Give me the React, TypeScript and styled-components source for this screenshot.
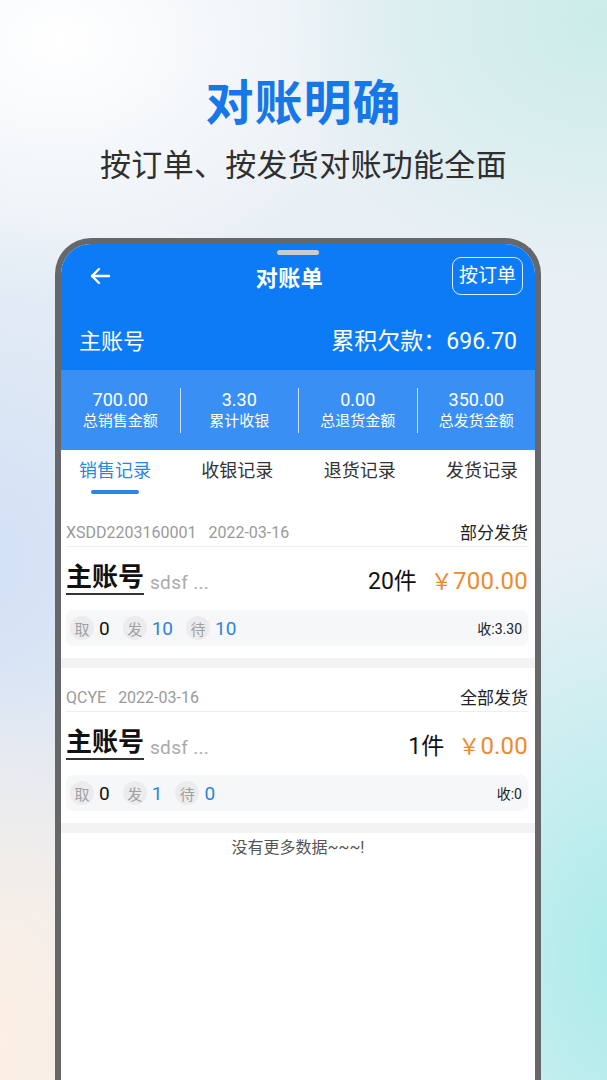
import React from 'react';
import styled, { createGlobalStyle } from 'styled-components';

const GlobalStyle = createGlobalStyle`
  html, body {
    margin: 0;
    padding: 0;
  }
  body {
    font-family: Roboto, "Noto Sans CJK SC", sans-serif;
  }
`;

const Page = styled.div`
  width: 607px;
  height: 1080px;
  overflow: hidden;
  display: flex;
  flex-direction: column;
  align-items: center;
  background:
    radial-gradient(ellipse 320px 260px at 600px 20px, rgba(200, 236, 232, 0.9), transparent),
    radial-gradient(ellipse 260px 420px at 620px 960px, rgba(170, 236, 234, 1), transparent),
    radial-gradient(ellipse 300px 380px at -20px 1040px, rgba(253, 238, 226, 1), transparent),
    radial-gradient(ellipse 320px 360px at -20px 560px, rgba(210, 224, 245, 1), transparent),
    radial-gradient(ellipse 340px 260px at 60px 40px, rgba(255, 255, 255, 1), transparent),
    #e8eff5;
`;

const Headline = styled.h1`
  margin: 74px 0 0;
  font-size: 48px;
  line-height: 60px;
  font-weight: 700;
  color: #1577ea;
  letter-spacing: 1px;
`;

const Subline = styled.p`
  margin: 12px 0 0;
  font-size: 31px;
  line-height: 40px;
  color: #2f2f2f;
  letter-spacing: 0.3px;
`;

const Phone = styled.div`
  margin: 52px 0 0 55px;
  align-self: flex-start;
  width: 474px;
  flex: 1;
  border: 6px solid #666768;
  border-bottom: none;
  border-radius: 36px 36px 0 0;
  background: #fff;
  overflow: hidden;
  position: relative;
  display: flex;
  flex-direction: column;
`;

const Notch = styled.div`
  position: absolute;
  top: 6px;
  left: 50%;
  margin-left: -21px;
  width: 42px;
  height: 5px;
  border-radius: 3px;
  background: #c9ccd1;
`;

const Header = styled.div`
  background: #0e7bf6;
  color: #fff;
`;

const NavBar = styled.div`
  height: 64px;
  display: flex;
  align-items: center;
  justify-content: space-between;
  padding: 0 12px 0 28px;
`;

const BackButton = styled.div`
  display: flex;
  align-items: center;
`;

const NavTitle = styled.div`
  margin-left: 16px;
  font-size: 22px;
  font-weight: 700;
  letter-spacing: 0.5px;
`;

const OutlineButton = styled.div`
  border: 1px solid rgba(255, 255, 255, 0.85);
  border-radius: 9px;
  padding: 0 6px;
  height: 36px;
  line-height: 35px;
  font-size: 19px;
`;

const AccountRow = styled.div`
  height: 62px;
  display: flex;
  align-items: center;
  justify-content: space-between;
  padding: 0 18px;
`;

const AccountName = styled.div`
  font-size: 22px;
`;

const Debt = styled.div`
  font-size: 23px;
`;

const Stats = styled.div`
  height: 80px;
  background: #3a8ff5;
  display: grid;
  grid-template-columns: repeat(4, 1fr);
  align-items: center;
`;

const Stat = styled.div<{ $divider?: boolean }>`
  height: 45px;
  display: flex;
  flex-direction: column;
  align-items: center;
  justify-content: center;
  color: #fff;
  border-left: ${(p) => (p.$divider ? '1px solid rgba(255,255,255,0.75)' : 'none')};
`;

const StatValue = styled.div`
  font-size: 18px;
  line-height: 22px;
`;

const StatLabel = styled.div`
  font-size: 15px;
  line-height: 21px;
`;

const Tabs = styled.div`
  height: 53px;
  display: flex;
  justify-content: space-between;
  padding: 0 17px 0 18px;
`;

const Tab = styled.div<{ $active?: boolean }>`
  position: relative;
  font-size: 18px;
  line-height: 22px;
  padding-top: 10px;
  color: ${(p) => (p.$active ? '#2a86e6' : '#333')};
  &::after {
    content: '';
    display: ${(p) => (p.$active ? 'block' : 'none')};
    position: absolute;
    left: 50%;
    margin-left: -24px;
    top: 40px;
    width: 48px;
    height: 4px;
    border-radius: 2px;
    background: #2a86e6;
  }
`;

const Card = styled.div`
  padding: 0 7px 12px 5px;
`;

const CardHead = styled.div`
  height: 44px;
  box-sizing: border-box;
  display: flex;
  align-items: flex-end;
  justify-content: space-between;
  padding-bottom: 2px;
  border-bottom: 1px solid #eeeeee;
  line-height: 22px;
`;

const OrderMeta = styled.div`
  font-size: 16px;
  color: #9a9a9a;
  display: flex;
  gap: 12px;
`;

const Status = styled.div`
  font-size: 17px;
  color: #222;
`;

const NameRow = styled.div`
  height: 63px;
  display: flex;
  align-items: center;
  justify-content: space-between;
`;

const NameGroup = styled.div`
  display: flex;
  align-items: flex-end;
  gap: 6px;
`;

const Name = styled.div`
  font-size: 26px;
  font-weight: 700;
  line-height: 31px;
  color: #111;
  border-bottom: 2px solid #333;
`;

const Remark = styled.div`
  font-size: 19px;
  color: #aaa;
  line-height: 24px;
  letter-spacing: 0.3px;
`;

const AmountGroup = styled.div`
  display: flex;
  align-items: center;
  gap: 14px;
`;

const Qty = styled.div`
  font-size: 23px;
  color: #111;
`;

const Price = styled.div`
  font-size: 24px;
  color: #ef8a2c;
  letter-spacing: 0.2px;
`;

const Yen = styled.span`
  font-family: "Noto Sans CJK SC", sans-serif;
  font-size: 22px;
`;

const SubRow = styled.div`
  height: 36px;
  border-radius: 7px;
  background: #f6f7f8;
  display: flex;
  align-items: center;
  justify-content: space-between;
  padding: 0 6px 0 4px;
`;

const Counts = styled.div`
  display: flex;
  align-items: center;
`;

const Badge = styled.span`
  width: 24px;
  height: 24px;
  border-radius: 50%;
  background: #ececee;
  color: #a0a0a0;
  font-size: 15px;
  display: flex;
  align-items: center;
  justify-content: center;
  margin-right: 5px;
`;

const Count = styled.span<{ $blue?: boolean }>`
  font-size: 19px;
  color: ${(p) => (p.$blue ? '#2f84d8' : '#111')};
  margin-right: 13px;
`;

const Received = styled.div`
  font-size: 14px;
  color: #222;
`;

const Gap = styled.div`
  height: 10px;
  background: #f3f3f4;
`;

const EndNote = styled.div`
  text-align: center;
  font-size: 16px;
  line-height: 22px;
  color: #555;
  padding-top: 4px;
`;

interface Order {
  no: string;
  date: string;
  status: string;
  qty: string;
  price: string;
  take: string;
  sent: string;
  wait: string;
  received: string;
}

const orders: Order[] = [
  { no: 'XSDD2203160001', date: '2022-03-16', status: '部分发货', qty: '20件', price: '700.00', take: '0', sent: '10', wait: '10', received: '收:3.30' },
  { no: 'QCYE', date: '2022-03-16', status: '全部发货', qty: '1件', price: '0.00', take: '0', sent: '1', wait: '0', received: '收:0' },
];

const stats = [
  { value: '700.00', label: '总销售金额' },
  { value: '3.30', label: '累计收银' },
  { value: '0.00', label: '总退货金额' },
  { value: '350.00', label: '总发货金额' },
];

const tabs = ['销售记录', '收银记录', '退货记录', '发货记录'];

const ArrowLeft = () => (
  <svg width="22" height="22" viewBox="0 0 22 22" fill="none" stroke="#fff" strokeWidth="2.4" strokeLinecap="round" strokeLinejoin="round">
    <path d="M20 11H3" />
    <path d="M10 4L3 11l7 7" />
  </svg>
);

const OrderCard = ({ order }: { order: Order }) => (
  <Card>
    <CardHead>
      <OrderMeta>
        <span>{order.no}</span>
        <span>{order.date}</span>
      </OrderMeta>
      <Status>{order.status}</Status>
    </CardHead>
    <NameRow>
      <NameGroup>
        <Name>主账号</Name>
        <Remark>sdsf ...</Remark>
      </NameGroup>
      <AmountGroup>
        <Qty>{order.qty}</Qty>
        <Price>
          <Yen>￥</Yen>
          {order.price}
        </Price>
      </AmountGroup>
    </NameRow>
    <SubRow>
      <Counts>
        <Badge>取</Badge>
        <Count>{order.take}</Count>
        <Badge>发</Badge>
        <Count $blue>{order.sent}</Count>
        <Badge>待</Badge>
        <Count $blue>{order.wait}</Count>
      </Counts>
      <Received>{order.received}</Received>
    </SubRow>
  </Card>
);

export default function App() {
  return (
    <>
      <GlobalStyle />
      <Page>
        <Headline>对账明确</Headline>
        <Subline>按订单、按发货对账功能全面</Subline>
        <Phone>
          <Notch />
          <Header>
            <NavBar>
              <BackButton>
                <ArrowLeft />
              </BackButton>
              <NavTitle>对账单</NavTitle>
              <OutlineButton>按订单</OutlineButton>
            </NavBar>
            <AccountRow>
              <AccountName>主账号</AccountName>
              <Debt>累积欠款：696.70</Debt>
            </AccountRow>
          </Header>
          <Stats>
            {stats.map((s, i) => (
              <Stat key={s.label} $divider={i > 0}>
                <StatValue>{s.value}</StatValue>
                <StatLabel>{s.label}</StatLabel>
              </Stat>
            ))}
          </Stats>
          <Tabs>
            {tabs.map((t, i) => (
              <Tab key={t} $active={i === 0}>{t}</Tab>
            ))}
          </Tabs>
          {orders.map((o) => (
            <React.Fragment key={o.no}>
              <OrderCard order={o} />
              <Gap />
            </React.Fragment>
          ))}
          <EndNote>没有更多数据~~~!</EndNote>
        </Phone>
      </Page>
    </>
  );
}
